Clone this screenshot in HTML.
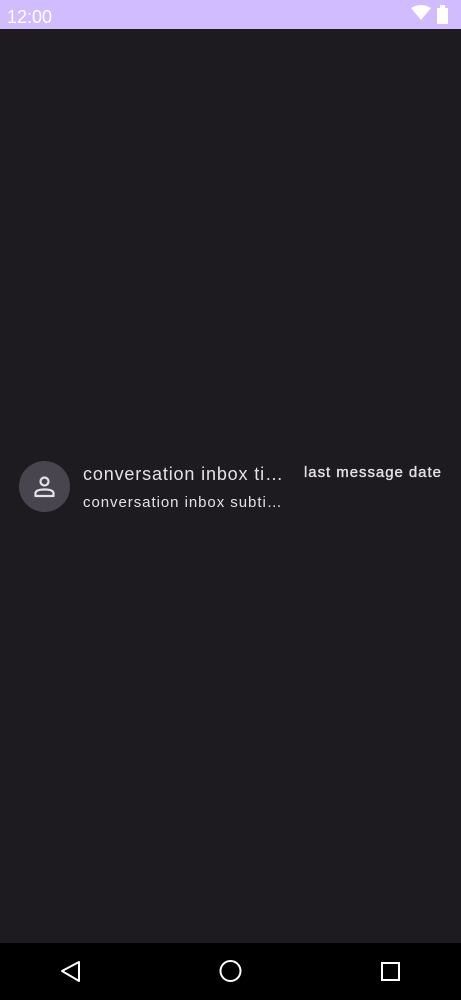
<!DOCTYPE html>
<html><head><style>
html,body{margin:0;width:461px;height:1000px;overflow:hidden;}
body{background:#1d1b20;position:relative;font-family:"Liberation Sans",sans-serif;}
.sb{position:absolute;top:0;left:0;width:461px;height:29px;background:#d0bcff;}
.sb span{position:absolute;left:7px;top:7px;color:#fff;font-size:18px;}
.nav{position:absolute;top:943px;left:0;width:461px;height:57px;background:#000;}
.t{position:absolute;color:#e6e0e9;white-space:nowrap;}
</style></head><body>
<div class="sb"><span>12:00</span>
<svg style="position:absolute;left:410px;top:5px" width="44" height="20"><path d="M1 3 Q11 -3 21 3 L11 15 Z" fill="#fff"/><rect x="27" y="3" width="11" height="16" fill="#fff"/><rect x="30" y="0" width="5" height="3" fill="#fff"/></svg>
</div>
<div style="position:absolute;left:19px;top:461px;width:51px;height:51px;border-radius:50%;background:#49454f"></div>
<svg style="position:absolute;left:30px;top:472px" width="29" height="29" viewBox="0 0 29 29"><circle cx="14.5" cy="9.5" r="4" fill="none" stroke="#e6e0e9" stroke-width="2.2"/><path d="M5.5 24 V21.5 Q5.5 17.5 14.5 17.5 Q23.5 17.5 23.5 21.5 V24 Z" fill="none" stroke="#e6e0e9" stroke-width="2.2" stroke-linejoin="round"/></svg>
<div class="t" style="left:83px;top:464px;font-size:18px;letter-spacing:0.85px">conversation inbox ti…</div>
<div class="t" style="left:83px;top:494px;font-size:15px;letter-spacing:0.95px">conversation inbox subti…</div>
<div class="t" style="left:304px;top:464px;font-size:15px;letter-spacing:0.95px;-webkit-text-stroke:0.35px #e6e0e9">last message date</div>
<div class="nav">
<svg width="461" height="57"><path d="M79 19 L62 28 L79 38 Z" fill="none" stroke="#fff" stroke-width="2" stroke-linejoin="round"/><circle cx="230.5" cy="28" r="10" fill="none" stroke="#fff" stroke-width="2"/><rect x="382" y="20" width="17" height="17" fill="none" stroke="#fff" stroke-width="2"/></svg>
</div>
</body></html>
